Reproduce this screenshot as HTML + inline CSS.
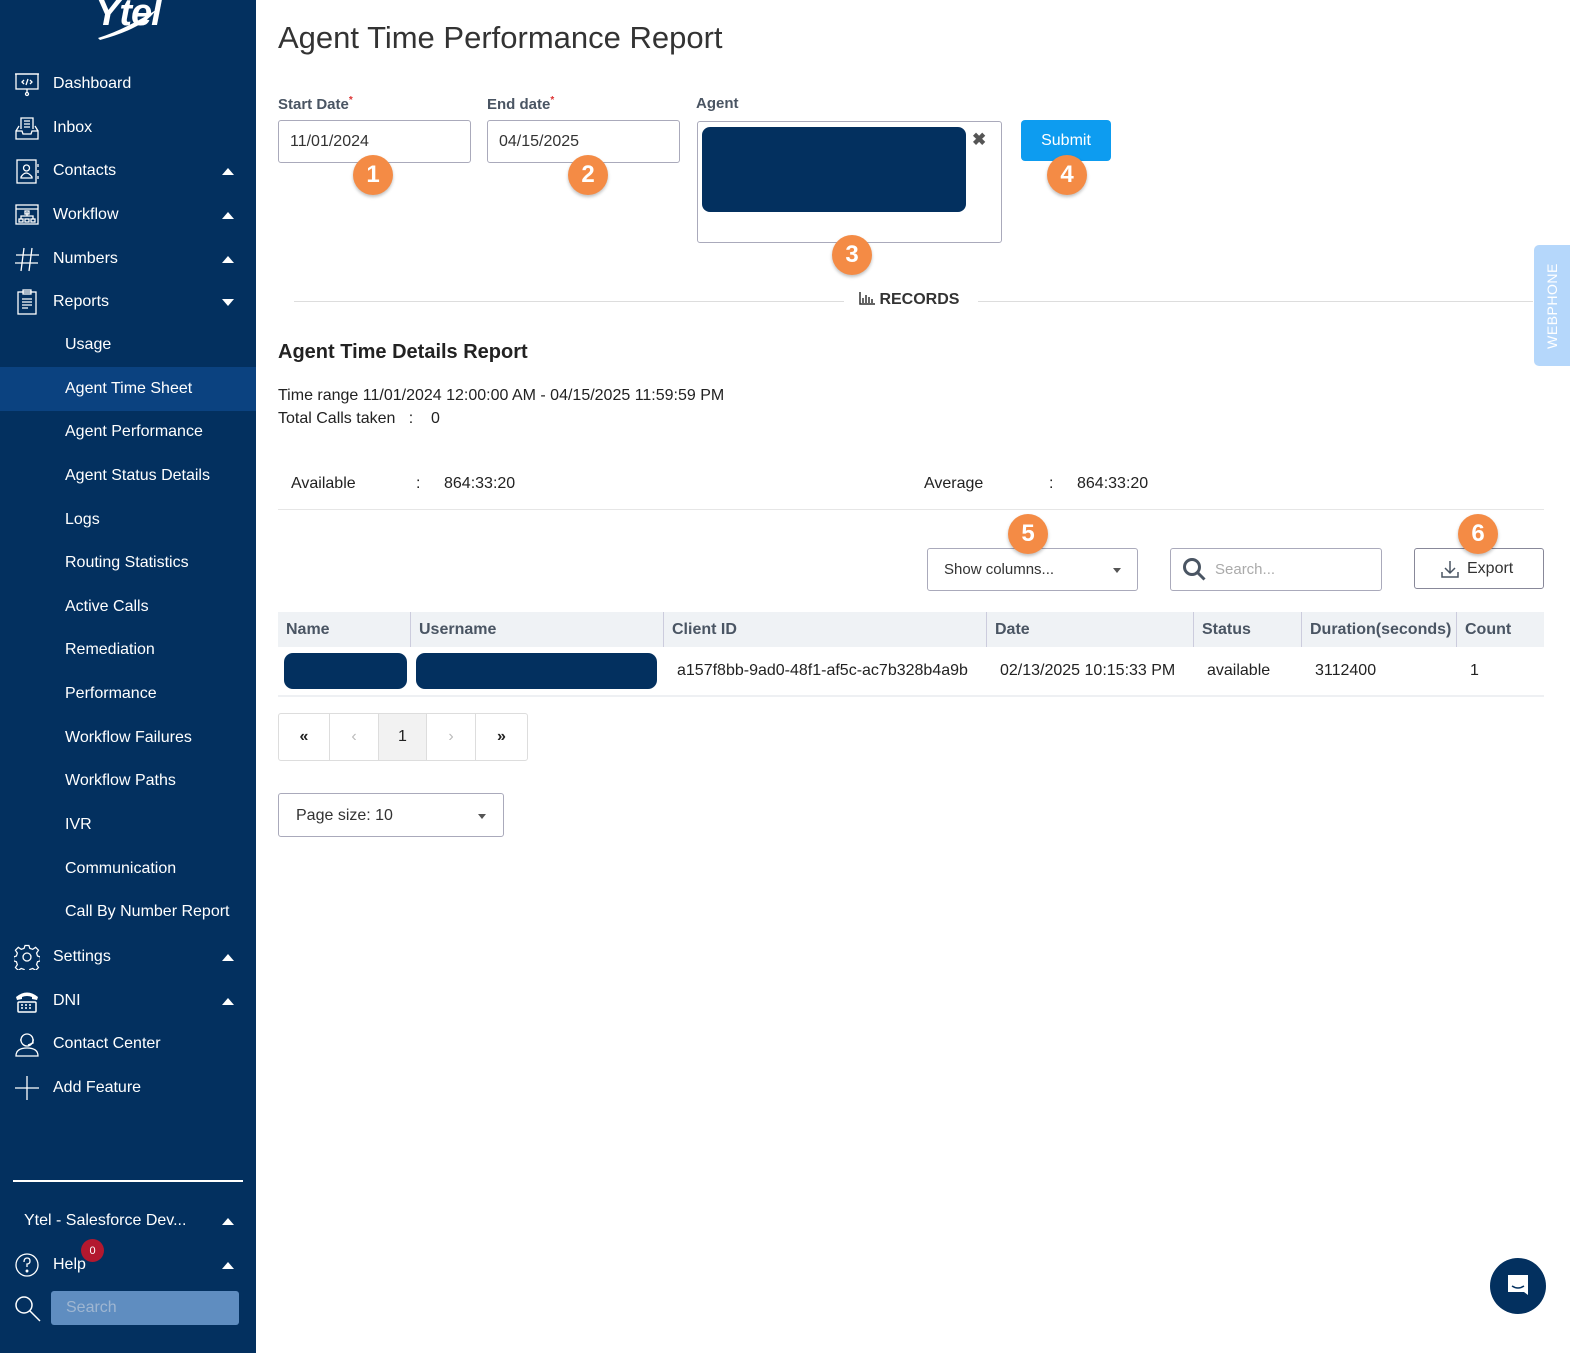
<!DOCTYPE html>
<html><head><meta charset="utf-8"><style>
*{box-sizing:border-box;margin:0;padding:0}
body{width:1588px;height:1353px;overflow:hidden;background:#fff;font-family:"Liberation Sans",sans-serif;color:#222;position:relative}
.sb{position:absolute;left:0;top:0;width:256px;height:1353px;background:#03305f;color:#fff}
.it{position:absolute;left:0;width:256px;height:44px;display:flex;align-items:center;font-size:16px}
.it .ic{position:absolute;left:14px;width:26px;height:26px}
.it .t{position:absolute;left:53px}
.it.sub .t{left:65px}
.it.sel{background:#0b4280}
.car{position:absolute;left:222px;width:0;height:0;border-left:6px solid transparent;border-right:6px solid transparent}
.up{border-bottom:7px solid #fff}
.dn{border-top:7px solid #fff}
.main{position:absolute;left:256px;top:0;right:0;bottom:0}
.abs{position:absolute}
.lbl{font-size:15px;color:#4a5563;font-weight:bold}
.inp{border:1px solid #aab;border-radius:3px;background:#fff;font-size:16px;color:#333}
.badge{position:absolute;width:40px;height:40px;border-radius:50%;background:#f48b45;color:#fff;font-size:24px;font-weight:bold;display:flex;align-items:center;justify-content:center;box-shadow:0 2px 3px rgba(0,0,0,.25)}
th,td{text-align:left}
</style></head><body>
<div class="sb">
  <div class="abs" style="left:95px;top:-8px;font:italic bold 38px 'Liberation Sans',sans-serif;color:#fff;letter-spacing:-1px">Ytel</div>
  <svg class="abs" style="left:94px;top:8px" width="70" height="35"><path d="M4 30 Q30 22 62 2 Q50 20 6 32Z" fill="#fff"/></svg>
  <div class="it" style="top:62px"><svg class="ic" viewBox="0 0 26 26" fill="none" stroke="#fff" stroke-width="1.3"><rect x="2" y="3" width="22" height="15"/><path d="M1 3h24M13 18v4"/><circle cx="13" cy="23" r="1.5"/><path d="M10 9l-2 2 2 2M16 9l2 2-2 2M14 8l-2 6"/></svg><span class="t">Dashboard</span></div>
  <div class="it" style="top:106px"><svg class="ic" viewBox="0 0 26 26" fill="none" stroke="#fff" stroke-width="1.3"><path d="M2 16h6l1 3h8l1-3h6v8H2zM2 16l3-5M24 16l-3-5M7 14V3h12v11M10 6h6M10 9h6M10 12h6"/></svg><span class="t">Inbox</span></div>
  <div class="it" style="top:149px"><svg class="ic" viewBox="0 0 26 26" fill="none" stroke="#fff" stroke-width="1.3"><rect x="3" y="2" width="19" height="23"/><circle cx="12.5" cy="10" r="3"/><path d="M7 19q5-8 11 0v1H7z M24 6v3M24 12v3M24 18v3"/></svg><span class="t">Contacts</span><span class="car up"></span></div>
  <div class="it" style="top:193px"><svg class="ic" viewBox="0 0 26 26" fill="none" stroke="#fff" stroke-width="1.3"><rect x="2" y="3" width="22" height="19"/><path d="M2 7h22M13 10v4M7 17v-3h12v3"/><rect x="11" y="9" width="4" height="3"/><rect x="5" y="17" width="4" height="3"/><rect x="11" y="17" width="4" height="3"/><rect x="17" y="17" width="4" height="3"/></svg><span class="t">Workflow</span><span class="car up"></span></div>
  <div class="it" style="top:237px"><svg class="ic" viewBox="0 0 26 26" fill="none" stroke="#fff" stroke-width="1.3"><path d="M10 2L7 25M18 2l-3 23M2 9h23M1 17h23"/></svg><span class="t">Numbers</span><span class="car up"></span></div>
  <div class="it" style="top:280px"><svg class="ic" viewBox="0 0 26 26" fill="none" stroke="#fff" stroke-width="1.3"><rect x="4" y="3" width="18" height="22"/><rect x="9" y="1" width="8" height="4"/><path d="M8 10h10M8 13h10M8 16h10M8 19h6"/></svg><span class="t">Reports</span><span class="car dn"></span></div>
  <div class="it sub" style="top:323px"><span class="t">Usage</span></div>
  <div class="it sub sel" style="top:367px"><span class="t">Agent Time Sheet</span></div>
  <div class="it sub" style="top:410px"><span class="t">Agent Performance</span></div>
  <div class="it sub" style="top:454px"><span class="t">Agent Status Details</span></div>
  <div class="it sub" style="top:498px"><span class="t">Logs</span></div>
  <div class="it sub" style="top:541px"><span class="t">Routing Statistics</span></div>
  <div class="it sub" style="top:585px"><span class="t">Active Calls</span></div>
  <div class="it sub" style="top:628px"><span class="t">Remediation</span></div>
  <div class="it sub" style="top:672px"><span class="t">Performance</span></div>
  <div class="it sub" style="top:716px"><span class="t">Workflow Failures</span></div>
  <div class="it sub" style="top:759px"><span class="t">Workflow Paths</span></div>
  <div class="it sub" style="top:803px"><span class="t">IVR</span></div>
  <div class="it sub" style="top:847px"><span class="t">Communication</span></div>
  <div class="it sub" style="top:890px"><span class="t">Call By Number Report</span></div>
  <div class="it" style="top:935px"><svg class="ic" viewBox="0 0 26 26" fill="none" stroke="#fff" stroke-width="1.3"><circle cx="13" cy="13" r="4"/><path d="M11 1h4l1 3 3 1 3-2 3 3-2 3 1 3 3 1v4l-3 1-1 3 2 3-3 3-3-2-3 1-1 3h-4l-1-3-3-1-3 2-3-3 2-3-1-3-3-1v-4l3-1 1-3-2-3 3-3 3 2 3-1z" transform="scale(.96) translate(.5 .5)"/></svg><span class="t">Settings</span><span class="car up"></span></div>
  <div class="it" style="top:979px"><svg class="ic" viewBox="0 0 26 26" fill="#fff"><path d="M2 9q11-9 22 0l-1 3-5-1v-2q-5-2-10 0v2l-5 1z"/><rect x="4" y="14" width="18" height="10" rx="1" fill="none" stroke="#fff" stroke-width="1.5"/><path d="M7 17h2M11 17h2M15 17h2M7 20h2M11 20h2M15 20h2" stroke="#fff" stroke-width="1.5"/></svg><span class="t">DNI</span><span class="car up"></span></div>
  <div class="it" style="top:1022px"><svg class="ic" viewBox="0 0 26 26" fill="none" stroke="#fff" stroke-width="1.3"><circle cx="13" cy="9" r="6"/><path d="M2 25q0-8 11-8t11 8zM7 9h-1M20 9h-1v3l-5 2"/></svg><span class="t">Contact Center</span></div>
  <div class="it" style="top:1066px"><svg class="ic" viewBox="0 0 26 26" fill="none" stroke="#fff" stroke-width="1.3"><path d="M13 1v24M1 13h24"/></svg><span class="t">Add Feature</span></div>
  <div class="abs" style="left:13px;top:1180px;width:230px;height:2px;background:#fff"></div>
  <div class="it" style="top:1199px"><span class="t" style="left:24px">Ytel - Salesforce Dev...</span><span class="car up"></span></div>
  <div class="it" style="top:1243px"><svg class="ic" viewBox="0 0 26 26" fill="none" stroke="#fff" stroke-width="1.3"><circle cx="13" cy="13" r="11"/><path d="M10 10q0-4 3-4t3 3-3 3v3"/><circle cx="13" cy="19" r=".8" fill="#fff"/></svg><span class="t">Help</span><span class="car up"></span></div>
  <div class="abs" style="left:81px;top:1239px;width:23px;height:23px;border-radius:50%;background:#b3182f;color:#fff;font-size:11px;display:flex;align-items:center;justify-content:center">0</div>
  <svg class="abs" style="left:14px;top:1295px" width="28" height="28" fill="none" stroke="#fff" stroke-width="1.5"><circle cx="10" cy="10" r="8"/><path d="M16 16l10 10"/></svg>
  <div class="abs" style="left:51px;top:1291px;width:188px;height:34px;background:#5f8dc0;border-radius:3px;color:#9fb6d1;font-size:16px;padding:8px 15px">Search</div>
</div>

<div class="main">
  <div class="abs" style="left:22px;top:20px;font-size:31px;color:#333;font-weight:300">Agent Time Performance Report</div>
  <div class="abs lbl" style="left:22px;top:95px">Start Date<sup style="color:#d33;font-size:10px">*</sup></div>
  <div class="abs lbl" style="left:231px;top:95px">End date<sup style="color:#d33;font-size:10px">*</sup></div>
  <div class="abs lbl" style="left:440px;top:95px">Agent</div>
  <div class="abs inp" style="left:22px;top:120px;width:193px;height:43px;padding:12px 11px">11/01/2024</div>
  <div class="abs inp" style="left:231px;top:120px;width:193px;height:43px;padding:12px 11px">04/15/2025</div>
  <div class="abs inp" style="left:441px;top:121px;width:305px;height:122px"></div>
  <div class="abs" style="left:446px;top:127px;width:264px;height:85px;background:#03305f;border-radius:8px"></div>
  <div class="abs" style="left:716px;top:130px;font-size:17px;font-weight:bold;color:#555">✖</div>
  <div class="abs" style="left:765px;top:120px;width:90px;height:41px;background:#0d9cf0;border-radius:4px;color:#fff;font-size:16px;display:flex;align-items:center;justify-content:center">Submit</div>
  <div class="badge" style="left:97px;top:155px">1</div>
  <div class="badge" style="left:312px;top:155px">2</div>
  <div class="badge" style="left:576px;top:235px">3</div>
  <div class="badge" style="left:791px;top:155px">4</div>
  <div class="abs" style="left:38px;top:301px;width:550px;height:1px;background:#ddd"></div>
  <div class="abs" style="left:722px;top:301px;width:555px;height:1px;background:#ddd"></div>
  <div class="abs" style="left:603px;top:291px;font-size:16px;font-weight:bold;color:#333">
    <svg width="16" height="14" style="vertical-align:-1px"><path d="M1 1v12h15M4 7v5M7 4v8M10 6v6M13 8v4" stroke="#333" stroke-width="1.5" fill="none"/></svg> RECORDS</div>
  <div class="abs" style="left:1278px;top:245px;width:36px;height:121px;background:#b5d7fb;border-radius:5px 0 0 5px"></div>
  <div class="abs" style="left:1278px;top:245px;width:36px;height:121px;display:flex;align-items:center;justify-content:center"><span style="transform:rotate(-90deg);color:#fff;font-size:14px;letter-spacing:.5px;white-space:nowrap">WEBPHONE</span></div>

  <div class="abs" style="left:22px;top:341px;font-size:20px;font-weight:bold;color:#222">Agent Time Details Report</div>
  <div class="abs" style="left:22px;top:384px;font-size:16px;line-height:23px">Time range 11/01/2024 12:00:00 AM - 04/15/2025 11:59:59 PM<br>Total Calls taken &nbsp;&nbsp;: &nbsp;&nbsp;&nbsp;0</div>
  <div class="abs" style="left:35px;top:475px;font-size:16px">Available</div>
  <div class="abs" style="left:160px;top:475px;font-size:16px">:</div>
  <div class="abs" style="left:188px;top:475px;font-size:16px">864:33:20</div>
  <div class="abs" style="left:668px;top:475px;font-size:16px">Average</div>
  <div class="abs" style="left:793px;top:475px;font-size:16px">:</div>
  <div class="abs" style="left:821px;top:475px;font-size:16px">864:33:20</div>
  <div class="abs" style="left:22px;top:509px;width:1266px;height:1px;background:#e6e6e6"></div>

  <div class="abs inp" style="left:671px;top:548px;width:211px;height:43px;padding:12px 16px;font-size:15px">Show columns...</div>
  <div class="abs" style="left:857px;top:568px;border-left:4px solid transparent;border-right:4px solid transparent;border-top:5px solid #555"></div>
  <div class="abs inp" style="left:914px;top:548px;width:212px;height:43px;padding:12px 44px;font-size:15px;color:#aaa">Search...</div>
  <svg class="abs" style="left:926px;top:557px" width="26" height="26" fill="none" stroke="#4a5563" stroke-width="3"><circle cx="10" cy="10" r="7.5"/><path d="M15.5 15.5l7 7"/></svg>
  <div class="abs inp" style="left:1158px;top:548px;width:130px;height:41px;padding:11px 0 0 52px;font-size:16px;border-color:#889">Export</div>
  <svg class="abs" style="left:1184px;top:559px" width="20" height="20" fill="none" stroke="#4a5563" stroke-width="1.5"><path d="M10 2v12M5 9l5 5 5-5M2 13v5h16v-5"/></svg>
  <div class="badge" style="left:752px;top:514px">5</div>
  <div class="badge" style="left:1202px;top:514px">6</div>

  <div class="abs" style="left:22px;top:612px;width:1266px;height:35px;background:#eff2f5;font-size:16px;font-weight:bold;color:#4a5563">
    <span class="abs" style="left:8px;top:9px">Name</span>
    <span class="abs" style="left:132px;top:0;width:1px;height:35px;background:#ccd"></span>
    <span class="abs" style="left:141px;top:9px">Username</span>
    <span class="abs" style="left:385px;top:0;width:1px;height:35px;background:#ccd"></span>
    <span class="abs" style="left:394px;top:9px">Client ID</span>
    <span class="abs" style="left:708px;top:0;width:1px;height:35px;background:#ccd"></span>
    <span class="abs" style="left:717px;top:9px">Date</span>
    <span class="abs" style="left:915px;top:0;width:1px;height:35px;background:#ccd"></span>
    <span class="abs" style="left:924px;top:9px">Status</span>
    <span class="abs" style="left:1023px;top:0;width:1px;height:35px;background:#ccd"></span>
    <span class="abs" style="left:1032px;top:9px">Duration(seconds)</span>
    <span class="abs" style="left:1178px;top:0;width:1px;height:35px;background:#ccd"></span>
    <span class="abs" style="left:1187px;top:9px">Count</span>
  </div>
  <div class="abs" style="left:28px;top:653px;width:123px;height:36px;background:#03305f;border-radius:9px"></div>
  <div class="abs" style="left:160px;top:653px;width:241px;height:36px;background:#03305f;border-radius:9px"></div>
  <div class="abs" style="left:421px;top:662px;font-size:16px">a157f8bb-9ad0-48f1-af5c-ac7b328b4a9b</div>
  <div class="abs" style="left:744px;top:662px;font-size:16px">02/13/2025 10:15:33 PM</div>
  <div class="abs" style="left:951px;top:662px;font-size:16px">available</div>
  <div class="abs" style="left:1059px;top:662px;font-size:16px">3112400</div>
  <div class="abs" style="left:1214px;top:662px;font-size:16px">1</div>
  <div class="abs" style="left:22px;top:695px;width:1266px;height:2px;background:#eef0f3"></div>

  <div class="abs" style="left:22px;top:713px;width:250px;height:48px;border:1px solid #ddd;border-radius:3px;display:flex;font-size:16px">
    <div style="width:51px;display:flex;align-items:center;justify-content:center;border-right:1px solid #ddd;font-weight:bold">«</div>
    <div style="width:49px;display:flex;align-items:center;justify-content:center;border-right:1px solid #ddd;color:#bbb">‹</div>
    <div style="width:48px;display:flex;align-items:center;justify-content:center;border-right:1px solid #ddd;background:#f2f2f2">1</div>
    <div style="width:49px;display:flex;align-items:center;justify-content:center;border-right:1px solid #ddd;color:#bbb">›</div>
    <div style="flex:1;display:flex;align-items:center;justify-content:center;font-weight:bold">»</div>
  </div>
  <div class="abs inp" style="left:22px;top:793px;width:226px;height:44px;padding:13px 17px;font-size:16px">Page size: 10</div>
  <div class="abs" style="left:222px;top:814px;border-left:4px solid transparent;border-right:4px solid transparent;border-top:5px solid #555"></div>

  <div class="abs" style="left:1234px;top:1258px;width:56px;height:56px;border-radius:50%;background:#03305f"></div>
  <svg class="abs" style="left:1250px;top:1273px" width="24" height="26"><path d="M2 2h20v20l-4-3H2z" fill="#fff"/><path d="M6 13q6 4 12 0" stroke="#03305f" stroke-width="1.5" fill="none"/></svg>
</div>
</body></html>
